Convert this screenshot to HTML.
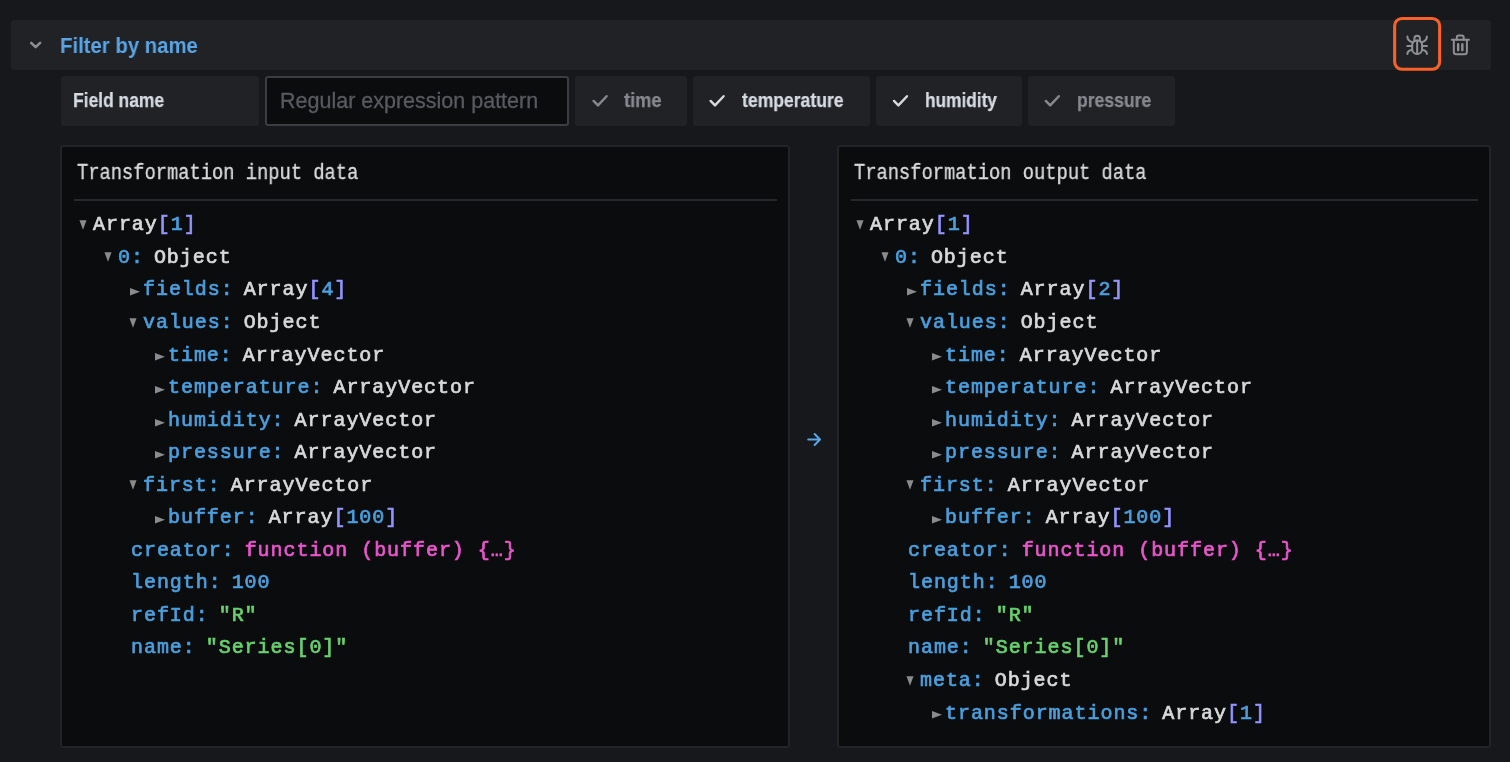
<!DOCTYPE html>
<html><head><meta charset="utf-8">
<style>
html,body{margin:0;padding:0;}
body{width:1510px;height:762px;overflow:hidden;background:#17181c;position:relative;font-family:"Liberation Sans",sans-serif;}
.abs,.row{will-change:transform;}
.abs{position:absolute;}
#hdr{left:11px;top:20px;width:1480px;height:50px;background:#202226;border-radius:3px;}
#title{left:60.3px;top:34px;font-size:22.4px;font-weight:bold;color:#5aa5e6;white-space:nowrap;line-height:24px;transform:scaleX(0.908);transform-origin:0 0;}
.box{background:#202226;border-radius:3px;}
#lbl{left:61px;top:76px;width:198px;height:50px;}
#lbltxt{left:72.5px;top:89.2px;font-size:19.3px;font-weight:bold;color:#d6dae2;-webkit-text-stroke:0.25px #d6dae2;line-height:24px;white-space:nowrap;transform:scaleX(0.905);transform-origin:0 0;}
#inp{left:265px;top:76px;width:300px;height:46px;background:#0b0c0e;border:2px solid #3a3d42;border-radius:3px;}
#ph{left:279.8px;top:89.4px;font-size:21.5px;color:#575b61;line-height:24px;white-space:nowrap;-webkit-text-stroke:0.3px #575b61;}
.chip{top:76px;height:50px;}
.ctxt{top:89.2px;font-size:19.3px;font-weight:bold;line-height:24px;white-space:nowrap;transform:scaleX(0.911);transform-origin:0 0;}
.on{color:#d6dae2;-webkit-text-stroke:0.25px #d6dae2;}
.off{color:#868a90;-webkit-text-stroke:0.25px #868a90;}
.panel{top:144.5px;height:599.2px;background:#0b0c0e;border:2px solid #222428;border-radius:3px;}
.ptitle{top:161.3px;font-family:"Liberation Mono",monospace;font-size:21.5px;color:#d8d9da;line-height:24px;white-space:nowrap;transform:scaleX(0.872);transform-origin:0 0;-webkit-text-stroke:0.35px #d8d9da;}
.sep{top:198.5px;height:1.6px;background:#26282c;}
.row{position:absolute;font-family:"Liberation Mono",monospace;font-size:20px;letter-spacing:0.95px;font-weight:normal;-webkit-text-stroke:0.7px currentColor;line-height:26px;white-space:pre;}
.k{color:#4a9fde;}
.v{color:#d8d9da;}
.b{color:#9494ff;}
.n{color:#4a9fde;}
.s{color:#68d16e;}
.f{color:#ea55cc;}
.tg{position:absolute;}
</style></head><body>
<div class="abs" id="hdr"></div>
<svg class="abs" style="left:29px;top:40px" width="14" height="10" viewBox="0 0 14 10"><path d="M2.2 2.9 L6.65 7.2 L11.1 2.9" fill="none" stroke="#8e9096" stroke-width="2.5" stroke-linecap="round" stroke-linejoin="round"/></svg>
<div class="abs" id="title">Filter by name</div>

<div class="abs box" id="lbl"></div>
<div class="abs" id="lbltxt">Field name</div>
<div class="abs" id="inp"></div>
<div class="abs" id="ph">Regular expression pattern</div>

<div class="abs box chip" style="left:575px;width:112px"></div>
<div class="abs box chip" style="left:693px;width:177px"></div>
<div class="abs box chip" style="left:876px;width:146px"></div>
<div class="abs box chip" style="left:1028px;width:147px"></div>

<div class="abs ctxt off" style="left:624.4px;transform:scaleX(0.945)">time</div>
<div class="abs ctxt on" style="left:742px">temperature</div>
<div class="abs ctxt on" style="left:924.5px;transform:scaleX(0.896)">humidity</div>
<div class="abs ctxt off" style="left:1077px">pressure</div>


<svg class="abs" style="left:0;top:0" width="1510" height="130" viewBox="0 0 1510 130">
<g fill="none" stroke-linecap="round" stroke-linejoin="round" stroke-width="2.4">
<path d="M593.6 100.9 L598.0 105.4 L606.6 96.2" stroke="#868a90"/>
<path d="M710.6 100.9 L715.0 105.4 L723.6 96.2" stroke="#d8d9da"/>
<path d="M894.0 100.9 L898.4 105.4 L907.0 96.2" stroke="#d8d9da"/>
<path d="M1045.8 100.9 L1050.2 105.4 L1058.8 96.2" stroke="#868a90"/>
</g>
<rect x="1394.65" y="18.45" width="45" height="50.8" rx="7.2" ry="7.2" fill="#202226" stroke="#f9602a" stroke-width="3.1"/>
<g fill="none" stroke="#8e9096" stroke-width="2" stroke-linecap="round" stroke-linejoin="round">
<path d="M1414.4 40.8 L1414.4 38.45 A2.75 2.75 0 0 1 1419.9 38.45 L1419.9 40.8"/>
<path d="M1412.2 49 L1412.2 45 C1412.2 42 1414.2 40.4 1417.15 40.4 C1420.1 40.4 1422.1 42 1422.1 45 L1422.1 49 A4.95 5.1 0 0 1 1412.2 49 Z"/>
<path d="M1417.15 40.6 L1417.15 54.1"/>
<path d="M1407.4 36.6 C1407.4 39.6 1409.2 41.3 1412 42.1"/>
<path d="M1426.9 36.6 C1426.9 39.6 1425.1 41.3 1422.3 42.1"/>
<path d="M1407.3 45.9 L1412 45.9 M1422.3 45.9 L1427 45.9"/>
<path d="M1407.4 54.1 C1407.4 51.6 1409.2 50.3 1412 50"/>
<path d="M1426.9 54.1 C1426.9 51.6 1425.1 50.3 1422.3 50"/>
<path d="M1451.8 39.8 L1468.9 39.8"/>
<path d="M1456.8 39.8 L1456.8 37.5 Q1456.8 35.6 1458.7 35.6 L1461.8 35.6 Q1463.7 35.6 1463.7 37.5 L1463.7 39.8"/>
<path d="M1453.8 39.8 L1453.8 51.7 Q1453.8 54.2 1456.3 54.2 L1464.4 54.2 Q1466.9 54.2 1466.9 51.7 L1466.9 39.8"/>
<path d="M1458.15 44.15 L1458.15 50.15 M1462.35 44.15 L1462.35 50.15" stroke-width="2.4"/>
</g>
</svg>

<!-- panels -->
<div class="abs panel" style="left:60.2px;width:726.3px"></div>
<div class="abs panel" style="left:837.3px;width:649.7px"></div>
<div class="abs ptitle" style="left:77px">Transformation input data</div>
<div class="abs ptitle" style="left:854px">Transformation output data</div>
<div class="abs sep" style="left:74px;width:703px"></div>
<div class="abs sep" style="left:851px;width:627px"></div>

<svg class="abs" style="left:800px;top:425px" width="30" height="30" viewBox="800 425 30 30"><path d="M808.2 439.5 L819.6 439.5 M814.6 434 L820 439.5 L814.6 445" fill="none" stroke="#5aa5e6" stroke-width="2" stroke-linecap="round" stroke-linejoin="round"/></svg>
<div id="rows">
<svg class="tg" style="left:78.7px;top:219.9px" width="8" height="10" viewBox="0 0 8 10"><path d="M0.45 0.3 L7.55 0.3 L4 9.7 Z" fill="#8a8b8d"/></svg>
<div class="row" style="left:93.0px;top:212.3px"><span class="v">Array</span><span class="b">[</span><span class="n">1</span><span class="b">]</span></div>
<svg class="tg" style="left:103.7px;top:252.4px" width="8" height="10" viewBox="0 0 8 10"><path d="M0.45 0.3 L7.55 0.3 L4 9.7 Z" fill="#8a8b8d"/></svg>
<div class="row" style="left:118.0px;top:244.8px"><span class="k">0:</span><span style="display:inline-block;width:10px"></span><span class="v">Object</span></div>
<svg class="tg" style="left:130.0px;top:288.3px" width="11" height="8" viewBox="0 0 11 8"><path d="M0 0 L10 3.8 L0 7.6 Z" fill="#8a8b8d"/></svg>
<div class="row" style="left:143.0px;top:277.4px"><span class="k">fields:</span><span style="display:inline-block;width:10px"></span><span class="v">Array</span><span class="b">[</span><span class="n">4</span><span class="b">]</span></div>
<svg class="tg" style="left:128.7px;top:317.6px" width="8" height="10" viewBox="0 0 8 10"><path d="M0.45 0.3 L7.55 0.3 L4 9.7 Z" fill="#8a8b8d"/></svg>
<div class="row" style="left:143.0px;top:309.9px"><span class="k">values:</span><span style="display:inline-block;width:10px"></span><span class="v">Object</span></div>
<svg class="tg" style="left:155.0px;top:353.4px" width="11" height="8" viewBox="0 0 11 8"><path d="M0 0 L10 3.8 L0 7.6 Z" fill="#8a8b8d"/></svg>
<div class="row" style="left:168.0px;top:342.5px"><span class="k">time:</span><span style="display:inline-block;width:10px"></span><span class="v">ArrayVector</span></div>
<svg class="tg" style="left:155.0px;top:385.9px" width="11" height="8" viewBox="0 0 11 8"><path d="M0 0 L10 3.8 L0 7.6 Z" fill="#8a8b8d"/></svg>
<div class="row" style="left:168.0px;top:375.0px"><span class="k">temperature:</span><span style="display:inline-block;width:10px"></span><span class="v">ArrayVector</span></div>
<svg class="tg" style="left:155.0px;top:418.5px" width="11" height="8" viewBox="0 0 11 8"><path d="M0 0 L10 3.8 L0 7.6 Z" fill="#8a8b8d"/></svg>
<div class="row" style="left:168.0px;top:407.6px"><span class="k">humidity:</span><span style="display:inline-block;width:10px"></span><span class="v">ArrayVector</span></div>
<svg class="tg" style="left:155.0px;top:451.1px" width="11" height="8" viewBox="0 0 11 8"><path d="M0 0 L10 3.8 L0 7.6 Z" fill="#8a8b8d"/></svg>
<div class="row" style="left:168.0px;top:440.1px"><span class="k">pressure:</span><span style="display:inline-block;width:10px"></span><span class="v">ArrayVector</span></div>
<svg class="tg" style="left:128.7px;top:480.3px" width="8" height="10" viewBox="0 0 8 10"><path d="M0.45 0.3 L7.55 0.3 L4 9.7 Z" fill="#8a8b8d"/></svg>
<div class="row" style="left:143.0px;top:472.7px"><span class="k">first:</span><span style="display:inline-block;width:10px"></span><span class="v">ArrayVector</span></div>
<svg class="tg" style="left:155.0px;top:516.1px" width="11" height="8" viewBox="0 0 11 8"><path d="M0 0 L10 3.8 L0 7.6 Z" fill="#8a8b8d"/></svg>
<div class="row" style="left:168.0px;top:505.2px"><span class="k">buffer:</span><span style="display:inline-block;width:10px"></span><span class="v">Array</span><span class="b">[</span><span class="n">100</span><span class="b">]</span></div>
<div class="row" style="left:131.0px;top:537.8px"><span class="k">creator:</span><span style="display:inline-block;width:10px"></span><span class="f">function (buffer) {…}</span></div>
<div class="row" style="left:131.0px;top:570.3px"><span class="k">length:</span><span style="display:inline-block;width:10px"></span><span class="n">100</span></div>
<div class="row" style="left:131.0px;top:602.9px"><span class="k">refId:</span><span style="display:inline-block;width:10px"></span><span class="s">"R"</span></div>
<div class="row" style="left:131.0px;top:635.4px"><span class="k">name:</span><span style="display:inline-block;width:10px"></span><span class="s">"Series[0]"</span></div>
<svg class="tg" style="left:855.7px;top:219.9px" width="8" height="10" viewBox="0 0 8 10"><path d="M0.45 0.3 L7.55 0.3 L4 9.7 Z" fill="#8a8b8d"/></svg>
<div class="row" style="left:870.0px;top:212.3px"><span class="v">Array</span><span class="b">[</span><span class="n">1</span><span class="b">]</span></div>
<svg class="tg" style="left:880.7px;top:252.4px" width="8" height="10" viewBox="0 0 8 10"><path d="M0.45 0.3 L7.55 0.3 L4 9.7 Z" fill="#8a8b8d"/></svg>
<div class="row" style="left:895.0px;top:244.8px"><span class="k">0:</span><span style="display:inline-block;width:10px"></span><span class="v">Object</span></div>
<svg class="tg" style="left:907.0px;top:288.3px" width="11" height="8" viewBox="0 0 11 8"><path d="M0 0 L10 3.8 L0 7.6 Z" fill="#8a8b8d"/></svg>
<div class="row" style="left:920.0px;top:277.4px"><span class="k">fields:</span><span style="display:inline-block;width:10px"></span><span class="v">Array</span><span class="b">[</span><span class="n">2</span><span class="b">]</span></div>
<svg class="tg" style="left:905.7px;top:317.6px" width="8" height="10" viewBox="0 0 8 10"><path d="M0.45 0.3 L7.55 0.3 L4 9.7 Z" fill="#8a8b8d"/></svg>
<div class="row" style="left:920.0px;top:309.9px"><span class="k">values:</span><span style="display:inline-block;width:10px"></span><span class="v">Object</span></div>
<svg class="tg" style="left:932.0px;top:353.4px" width="11" height="8" viewBox="0 0 11 8"><path d="M0 0 L10 3.8 L0 7.6 Z" fill="#8a8b8d"/></svg>
<div class="row" style="left:945.0px;top:342.5px"><span class="k">time:</span><span style="display:inline-block;width:10px"></span><span class="v">ArrayVector</span></div>
<svg class="tg" style="left:932.0px;top:385.9px" width="11" height="8" viewBox="0 0 11 8"><path d="M0 0 L10 3.8 L0 7.6 Z" fill="#8a8b8d"/></svg>
<div class="row" style="left:945.0px;top:375.0px"><span class="k">temperature:</span><span style="display:inline-block;width:10px"></span><span class="v">ArrayVector</span></div>
<svg class="tg" style="left:932.0px;top:418.5px" width="11" height="8" viewBox="0 0 11 8"><path d="M0 0 L10 3.8 L0 7.6 Z" fill="#8a8b8d"/></svg>
<div class="row" style="left:945.0px;top:407.6px"><span class="k">humidity:</span><span style="display:inline-block;width:10px"></span><span class="v">ArrayVector</span></div>
<svg class="tg" style="left:932.0px;top:451.1px" width="11" height="8" viewBox="0 0 11 8"><path d="M0 0 L10 3.8 L0 7.6 Z" fill="#8a8b8d"/></svg>
<div class="row" style="left:945.0px;top:440.1px"><span class="k">pressure:</span><span style="display:inline-block;width:10px"></span><span class="v">ArrayVector</span></div>
<svg class="tg" style="left:905.7px;top:480.3px" width="8" height="10" viewBox="0 0 8 10"><path d="M0.45 0.3 L7.55 0.3 L4 9.7 Z" fill="#8a8b8d"/></svg>
<div class="row" style="left:920.0px;top:472.7px"><span class="k">first:</span><span style="display:inline-block;width:10px"></span><span class="v">ArrayVector</span></div>
<svg class="tg" style="left:932.0px;top:516.1px" width="11" height="8" viewBox="0 0 11 8"><path d="M0 0 L10 3.8 L0 7.6 Z" fill="#8a8b8d"/></svg>
<div class="row" style="left:945.0px;top:505.2px"><span class="k">buffer:</span><span style="display:inline-block;width:10px"></span><span class="v">Array</span><span class="b">[</span><span class="n">100</span><span class="b">]</span></div>
<div class="row" style="left:908.0px;top:537.8px"><span class="k">creator:</span><span style="display:inline-block;width:10px"></span><span class="f">function (buffer) {…}</span></div>
<div class="row" style="left:908.0px;top:570.3px"><span class="k">length:</span><span style="display:inline-block;width:10px"></span><span class="n">100</span></div>
<div class="row" style="left:908.0px;top:602.9px"><span class="k">refId:</span><span style="display:inline-block;width:10px"></span><span class="s">"R"</span></div>
<div class="row" style="left:908.0px;top:635.4px"><span class="k">name:</span><span style="display:inline-block;width:10px"></span><span class="s">"Series[0]"</span></div>
<svg class="tg" style="left:905.7px;top:675.6px" width="8" height="10" viewBox="0 0 8 10"><path d="M0.45 0.3 L7.55 0.3 L4 9.7 Z" fill="#8a8b8d"/></svg>
<div class="row" style="left:920.0px;top:668.0px"><span class="k">meta:</span><span style="display:inline-block;width:10px"></span><span class="v">Object</span></div>
<svg class="tg" style="left:932.0px;top:711.4px" width="11" height="8" viewBox="0 0 11 8"><path d="M0 0 L10 3.8 L0 7.6 Z" fill="#8a8b8d"/></svg>
<div class="row" style="left:945.0px;top:700.5px"><span class="k">transformations:</span><span style="display:inline-block;width:10px"></span><span class="v">Array</span><span class="b">[</span><span class="n">1</span><span class="b">]</span></div>
</div>
</body></html>
